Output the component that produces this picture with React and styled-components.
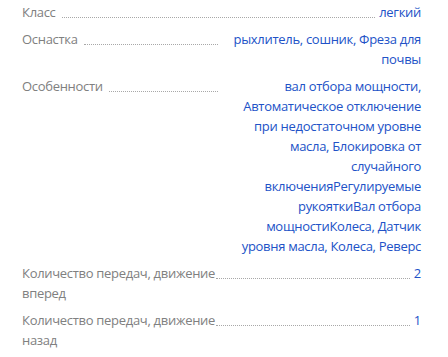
import React from 'react';
import styled, { createGlobalStyle } from 'styled-components';

const GlobalStyle = createGlobalStyle`
  body {
    margin: 0;
    background: #fff;
    font-family: "Open Sans", "Noto Sans", sans-serif;
  }
`;

const SpecList = styled.dl`
  margin: 0;
  padding: 2px 27px 0 22px;
  display: flex;
  flex-direction: column;
  gap: 7px;
  font-size: 13px;
  line-height: 20px;
  letter-spacing: -0.3px;
`;

const SpecRow = styled.div`
  display: flex;
  align-items: flex-start;
`;

const Term = styled.dt`
  flex: 0 1 auto;
  max-width: 50%;
  color: #808080;
`;

const Dots = styled.span`
  flex: 1 1 auto;
  min-width: 10px;
  height: 15px;
  margin: 0 4px 0 ${(p) => (p.$tight ? '-6px' : '6px')};
  border-bottom: 1px dotted #a8a8a8;
`;

const Value = styled.dd`
  flex: 0 1 auto;
  max-width: 50%;
  margin: 0;
  text-align: right;
  color: #2152c7;
`;

const specs = [
  { term: 'Класс', value: 'легкий' },
  { term: 'Оснастка', value: 'рыхлитель, сошник, Фреза для почвы' },
  {
    term: 'Особенности',
    value:
      'вал отбора мощности, Автоматическое отключение при недостаточном уровне масла, Блокировка от случайного включенияРегулируемые рукояткиВал отбора мощностиКолеса, Датчик уровня масла, Колеса, Реверс',
  },
  { term: 'Количество передач, движение вперед', value: '2', tight: true },
  { term: 'Количество передач, движение назад', value: '1', tight: true },
];

export default function App() {
  return (
    <>
      <GlobalStyle />
      <SpecList>
        {specs.map((s) => (
          <SpecRow key={s.term}>
            <Term>{s.term}</Term>
            <Dots $tight={s.tight} />
            <Value>{s.value}</Value>
          </SpecRow>
        ))}
      </SpecList>
    </>
  );
}
